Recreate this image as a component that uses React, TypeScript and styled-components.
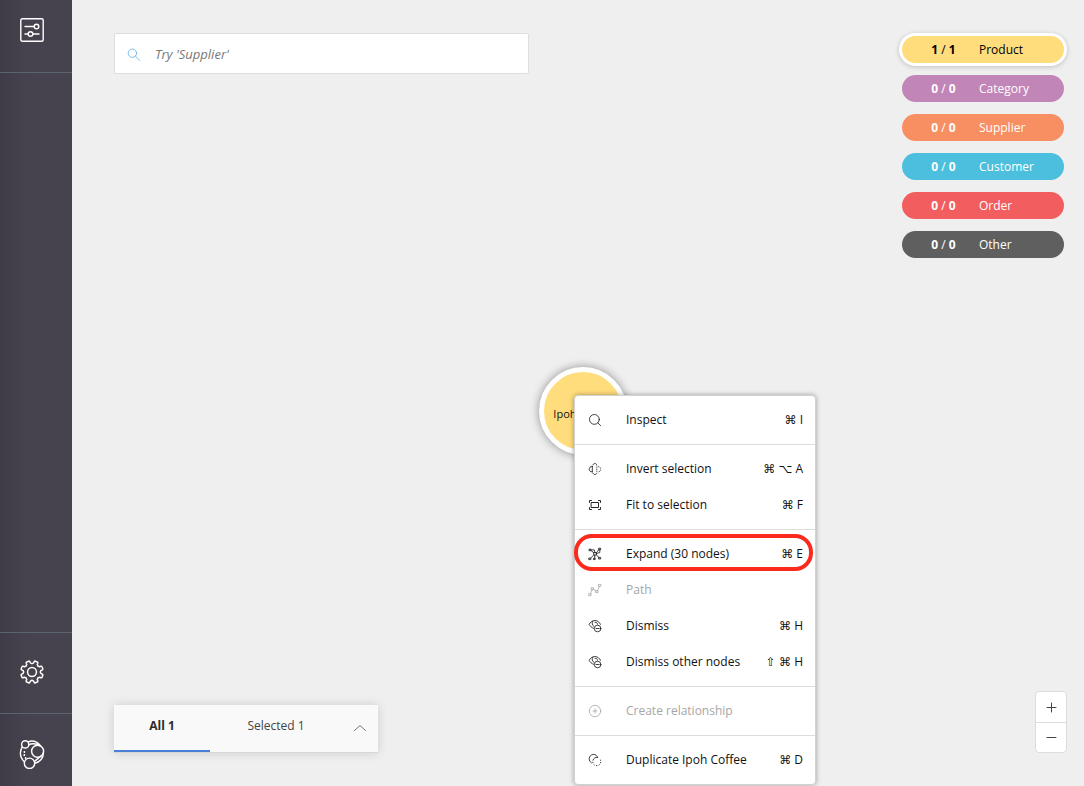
import React from 'react';
import styled, { createGlobalStyle, css } from 'styled-components';

const GlobalStyle = createGlobalStyle`
  *, *::before, *::after { box-sizing: border-box; }
  body {
    margin: 0;
    background: #efefef;
    color: #1a1a1a;
    font-family: 'Open Sans', 'DejaVu Sans', sans-serif;
    font-size: 12px;
    line-height: 16px;
  }
  button, input { font: inherit; color: inherit; }
  button { padding: 0; border: 0; background: none; cursor: pointer; }
  svg { display: block; flex: none; }
`;

const Page = styled.div`
  display: flex;
  min-height: 100vh;
`;

const Sidebar = styled.nav`
  display: flex;
  flex-direction: column;
  flex: none;
  width: 72px;
  background: linear-gradient(90deg, #3f3c47, #46434e 40%, #46434e);
  color: #fff;
`;

const SidebarButton = styled.button<{ $line: 'top' | 'bottom'; $height: number; $padding: string }>`
  display: flex;
  align-items: center;
  justify-content: center;
  height: ${(p) => p.$height}px;
  padding: ${(p) => p.$padding};
  border-${(p) => p.$line}: 1px solid #5b6270;
`;

const SidebarSpacer = styled.div`
  flex: 1;
`;

const Canvas = styled.main`
  position: relative;
  display: flex;
  flex: 1;
  flex-direction: column;
  justify-content: space-between;
  min-width: 0;
  padding: 33px 17px 33px 42px;
`;

const Bar = styled.div<{ $align: 'flex-start' | 'flex-end' }>`
  display: flex;
  align-items: ${(p) => p.$align};
  justify-content: space-between;
`;

const SearchBox = styled.label`
  display: flex;
  align-items: center;
  gap: 14px;
  flex: 0 1 415px;
  height: 41px;
  padding: 0 12px;
  border: 1px solid #dedede;
  border-radius: 2px;
  background: #fff;
  color: #5aaee2;
`;

const SearchInput = styled.input`
  flex: 1;
  min-width: 0;
  padding: 0;
  border: 0;
  outline: 0;
  background: transparent;
  color: #333;
  font-size: 13px;
  &::placeholder { color: #777; font-style: italic; opacity: 1; }
`;

const Legend = styled.div`
  display: flex;
  flex-direction: column;
  gap: 12px;
  padding: 3px;
`;

const Pill = styled.button<{ $color: string; $active?: boolean }>`
  display: flex;
  align-items: center;
  gap: 22px;
  width: 162px;
  height: 27px;
  padding-left: 28px;
  border-radius: 14px;
  background: ${(p) => p.$color};
  color: ${(p) => (p.$active ? '#000' : '#fff')};
  text-align: left;
  ${(p) => p.$active && css`box-shadow: 0 0 0 3px #fff, 0 1px 5px 3px rgba(0, 0, 0, 0.2);`}
`;

const Count = styled.span`
  width: 27px;
  text-align: center;
`;

const Tabs = styled.div`
  display: flex;
  width: 264px;
  height: 48px;
  border-bottom: 1px solid #d8d8d8;
  background: #f9f9f9;
  box-shadow: 0 0 10px rgba(0, 0, 0, 0.14);
`;

const Tab = styled.button<{ $active?: boolean; $width: number }>`
  width: ${(p) => p.$width}px;
  padding-bottom: ${(p) => (p.$active ? 3 : 5)}px;
  border-bottom: ${(p) => (p.$active ? '2px solid #4a7fd6' : '0')};
  color: ${(p) => (p.$active ? '#2b2b2b' : '#444')};
  font-weight: ${(p) => (p.$active ? 700 : 400)};
`;

const TabToggle = styled.button`
  display: flex;
  flex: 1;
  align-items: center;
  justify-content: center;
  color: #555;
`;

const ZoomControls = styled.div`
  display: flex;
  flex-direction: column;
  width: 32px;
  border: 1px solid #dcdcdc;
  border-radius: 4px;
  background: #fff;
`;

const ZoomButton = styled.button`
  display: flex;
  align-items: center;
  justify-content: center;
  height: 30px;
  color: #444;
  & + & { border-top: 1px solid #dcdcdc; }
`;

const GraphNode = styled.div`
  position: absolute;
  left: 467px;
  top: 367px;
  display: flex;
  align-items: center;
  justify-content: center;
  width: 88px;
  height: 88px;
  padding-top: 6px;
  border: 5px solid #fff;
  border-radius: 50%;
  background: #ffdd7c;
  box-shadow: 0 0 10px rgba(0, 0, 0, 0.4);
  color: #111;
  font-size: 11px;
  white-space: nowrap;
`;

const Menu = styled.div`
  position: absolute;
  left: 502px;
  top: 395px;
  width: 242px;
  border: 1px solid #d2d2d2;
  border-radius: 4px;
  background: #fff;
  box-shadow: 0 0 5px rgba(0, 0, 0, 0.35);
`;

const MenuGroup = styled.div`
  padding: 6px 0;
  & + & { border-top: 1px solid #dcdcdc; }
`;

const MenuItem = styled.button`
  position: relative;
  display: flex;
  align-items: center;
  width: 100%;
  height: 36px;
  padding: 0 12px 0 13px;
  color: #111;
  text-align: left;
  &:disabled { color: #a6a6a6; cursor: default; }
`;

const MenuLabel = styled.span`
  flex: 1;
  padding-left: 24px;
  white-space: nowrap;
`;

const Shortcut = styled.kbd`
  font: inherit;
`;

const Highlight = styled.span`
  position: absolute;
  inset: -2px 2px 1px -1px;
  border: 4px solid #fb2a1d;
  border-radius: 18px;
  pointer-events: none;
`;

interface IconProps {
  size?: number;
  box?: number;
  stroke?: number;
  children: React.ReactNode;
}

const Icon = ({ size = 14, box = 14, stroke = 0.8, children }: IconProps) => (
  <svg
    width={size}
    height={size}
    viewBox={`0 0 ${box} ${box}`}
    fill="none"
    stroke="currentColor"
    strokeWidth={stroke}
    strokeLinecap="round"
    strokeLinejoin="round"
    aria-hidden="true"
  >
    {children}
  </svg>
);

const PerspectiveIcon = () => (
  <Icon size={24} box={24} stroke={1.4}>
    <rect x="0.8" y="0.8" width="22.4" height="22.4" rx="1.5" />
    <path d="M5 8.5h9M5 16h3M13 16h6" />
    <circle cx="16.5" cy="8.5" r="2.3" />
    <circle cx="10.5" cy="16" r="2.3" />
  </Icon>
);

const gearPath = (() => {
  const points: string[] = [];
  for (let i = 0; i < 8; i += 1) {
    const at = (deg: number, r: number) => {
      const a = ((i * 45 + 22.5 + deg) * Math.PI) / 180;
      return `${(13 + r * Math.cos(a)).toFixed(2)} ${(13 + r * Math.sin(a)).toFixed(2)}`;
    };
    points.push(`${i ? 'L' : 'M'}${at(-13, 9.9)}L${at(-11, 11.4)}Q${at(-9, 12.4)} ${at(-5, 12.2)}L${at(5, 12.2)}Q${at(9, 12.4)} ${at(11, 11.4)}L${at(13, 9.9)}Q${at(22.5, 8.4)} ${at(32, 9.9)}`);
  }
  return `${points.join('')}Z`;
})();

const GearIcon = () => (
  <Icon size={24} box={26} stroke={1.6}>
    <path d={gearPath} />
    <circle cx="13" cy="13" r="4.8" />
  </Icon>
);

const LogoIcon = () => (
  <Icon size={30} box={30} stroke={1.4}>
    <circle cx="8.2" cy="5.4" r="3.6" />
    <circle cx="20.6" cy="12.2" r="6" />
    <circle cx="12.5" cy="24.3" r="5.2" />
    <path d="M11 2.8C15 1.3 20 2.6 23.5 6.8M11.8 5.8C14 4.3 19 4.1 22.5 6.500M5.2 7.8C2.4 13 3 18.4 7.3 22.8M17.7 24.2C22.5 23.3 26.5 19.3 26.5 13.5M17.5 22.4L24 17" />
    <path d="M7.4 12.8v.2M7.3 16v.2M8.6 18.8v.2" strokeWidth="1.8" />
  </Icon>
);

const BlueSearchIcon = () => (
  <Icon>
    <circle cx="5.4" cy="6.2" r="4.2" />
    <path d="M8.5 9.3l4.5 4.3" />
  </Icon>
);

const InspectIcon = () => (
  <Icon>
    <circle cx="6.4" cy="6.4" r="4.9" />
    <path d="M10 10l2.6 2.6" />
  </Icon>
);

const InvertIcon = () => (
  <Icon>
    <path d="M4.3 4.4C2.3 4.4 1.2 5.6 1.2 7.2s1.1 2.7 3.1 2.7M4.3 4.4v5.5" />
    <path d="M5 2.8C5.3 1.9 6 1.5 6.9 1.5s1.7.6 1.9 1.6M5 11.2c.3.9 1 1.3 1.9 1.3s1.6-.5 1.9-1.3M8.8 5v.4M8.8 7v.4M8.8 9v.4M10.6 4.7l.5.2M12.6 6v.2M12.6 8v.2M11 9.700l.4-.2" />
  </Icon>
);

const FitIcon = () => (
  <Icon stroke={0.9}>
    <rect x="3.5" y="4.5" width="7" height="5" />
    <path d="M1.5 4.500v-2h2M10.500 2.500h2v2M1.500 9.500v2h2M10.500 11.500h2v-2" />
  </Icon>
);

const ExpandIcon = () => (
  <Icon>
    <rect x="1.4" y="2.2" width="1.5" height="1.5" />
    <rect x="11" y="1.2" width="1.6" height="1.6" />
    <rect x="1.2" y="11" width="1.6" height="1.6" />
    <rect x="11" y="10.4" width="1.6" height="1.6" />
    <rect x="5.8" y="11.2" width="1.4" height="1.4" />
    <circle cx="7" cy="6.800" r="1.500" />
    <path d="M2.900 3.500l3 2.300M8.200 5.800L11 2.700M2.800 11l3.100-3.100M8.200 7.800l2.800 2.700M2.900 2.900h3.400l.5 2.300M11.800 2.800v2.700l-3.200.9M6.600 11.200l.3-2.800" />
  </Icon>
);

const PathIcon = () => (
  <Icon>
    <rect x="1.1" y="10.7" width="2" height="2" />
    <rect x="3.5" y="4.8" width="2" height="2" />
    <rect x="8" y="7.6" width="2" height="2" />
    <rect x="10.8" y="1.4" width="2" height="2" />
    <path d="M2.4 10.7l1.7-3.9M5.5 6.4L8 8M9.4 7.6l2-4.2" />
  </Icon>
);

const DismissIcon = () => (
  <Icon>
    <path d="M5.600 9.300C3.700 8.700 2.100 7.200 1.100 5.400 2.200 3.200 4.400 1.500 6.900 1.500c2.600 0 4.700 1.700 5.600 3.900M4.800 2.300C3.600 4 4 6.200 5.700 7.200M7 3.300c1.600-.2 2.600.9 2.600 1.900" />
    <circle cx="9.6" cy="9.5" r="3.300" />
    <path d="M8 9.500h3.200" />
  </Icon>
);

const CreateIcon = () => (
  <Icon>
    <circle cx="7" cy="7" r="5.7" />
    <path d="M7 5v4M5 7h4" />
  </Icon>
);

const DuplicateIcon = () => (
  <Icon>
    <path d="M3.4 9.8C2 9 1.2 7.4 1.2 5.8c0-2.4 1.9-4.4 4.3-4.4 2 0 3.6 1.2 4.1 3" />
    <path d="M9.6 4.4C7.4 4 5.5 5.2 5 7.2M4.9 9.2v.5M6 11.7l.4.3M8.4 12.6h.5M11 11.9l.3-.2M12.6 9.8v-.4M12.6 7.4v-.3" />
  </Icon>
);

const categories = [
  { name: 'Product', count: 1, total: 1, color: '#ffdd7c', active: true },
  { name: 'Category', count: 0, total: 0, color: '#c285b8' },
  { name: 'Supplier', count: 0, total: 0, color: '#f88f63' },
  { name: 'Customer', count: 0, total: 0, color: '#4bbfdd' },
  { name: 'Order', count: 0, total: 0, color: '#f25d5f' },
  { name: 'Other', count: 0, total: 0, color: '#5f5f5f' },
];

interface Action {
  label: string;
  keys?: string;
  icon: React.ReactNode;
  disabled?: boolean;
  highlighted?: boolean;
}

const menuGroups: Action[][] = [
  [{ label: 'Inspect', keys: '⌘ I', icon: <InspectIcon /> }],
  [
    { label: 'Invert selection', keys: '⌘ ⌥ A', icon: <InvertIcon /> },
    { label: 'Fit to selection', keys: '⌘ F', icon: <FitIcon /> },
  ],
  [
    { label: 'Expand (30 nodes)', keys: '⌘ E', icon: <ExpandIcon />, highlighted: true },
    { label: 'Path', icon: <PathIcon />, disabled: true },
    { label: 'Dismiss', keys: '⌘ H', icon: <DismissIcon /> },
    { label: 'Dismiss other nodes', keys: '⇧ ⌘ H', icon: <DismissIcon /> },
  ],
  [{ label: 'Create relationship', icon: <CreateIcon />, disabled: true }],
  [{ label: 'Duplicate Ipoh Coffee', keys: '⌘ D', icon: <DuplicateIcon /> }],
];

export default function App() {
  return (
    <>
      <GlobalStyle />
      <Page>
        <Sidebar>
          <SidebarButton $height={73} $line="bottom" $padding="0 8px 12px 0" aria-label="Perspective">
            <PerspectiveIcon />
          </SidebarButton>
          <SidebarSpacer />
          <SidebarButton $height={81} $line="top" $padding="0 8px 2px 0" aria-label="Settings">
            <GearIcon />
          </SidebarButton>
          <SidebarButton $height={73} $line="top" $padding="8px 8px 0 0" aria-label="About">
            <LogoIcon />
          </SidebarButton>
        </Sidebar>
        <Canvas>
          <Bar $align="flex-start">
            <SearchBox>
              <BlueSearchIcon />
              <SearchInput type="text" placeholder="Try 'Supplier'" aria-label="Search the graph" />
            </SearchBox>
            <Legend>
              {categories.map((c) => (
                <Pill key={c.name} $color={c.color} $active={c.active}>
                  <Count>
                    <b>{c.count}</b> / <b>{c.total}</b>
                  </Count>
                  <span>{c.name}</span>
                </Pill>
              ))}
            </Legend>
          </Bar>
          <Bar $align="flex-end">
            <Tabs>
              <Tab $active $width={96}>All 1</Tab>
              <Tab $width={132}>Selected 1</Tab>
              <TabToggle aria-label="Show details">
                <Icon>
                  <path d="M1.5 8.5L7 3.500l5.500 5" />
                </Icon>
              </TabToggle>
            </Tabs>
            <ZoomControls>
              <ZoomButton aria-label="Zoom in">
                <Icon size={11} box={11} stroke={1}>
                  <path d="M5.5 1v9M1 5.5h9" />
                </Icon>
              </ZoomButton>
              <ZoomButton aria-label="Zoom out">
                <Icon size={11} box={11} stroke={1}>
                  <path d="M1 5.5h9" />
                </Icon>
              </ZoomButton>
            </ZoomControls>
          </Bar>
          <GraphNode>Ipoh Coffee</GraphNode>
          <Menu role="menu">
            {menuGroups.map((group) => (
              <MenuGroup key={group[0].label} role="group">
                {group.map((item) => (
                  <MenuItem key={item.label} role="menuitem" disabled={item.disabled}>
                    {item.icon}
                    <MenuLabel>{item.label}</MenuLabel>
                    {item.keys && <Shortcut>{item.keys}</Shortcut>}
                    {item.highlighted && <Highlight />}
                  </MenuItem>
                ))}
              </MenuGroup>
            ))}
          </Menu>
        </Canvas>
      </Page>
    </>
  );
}
